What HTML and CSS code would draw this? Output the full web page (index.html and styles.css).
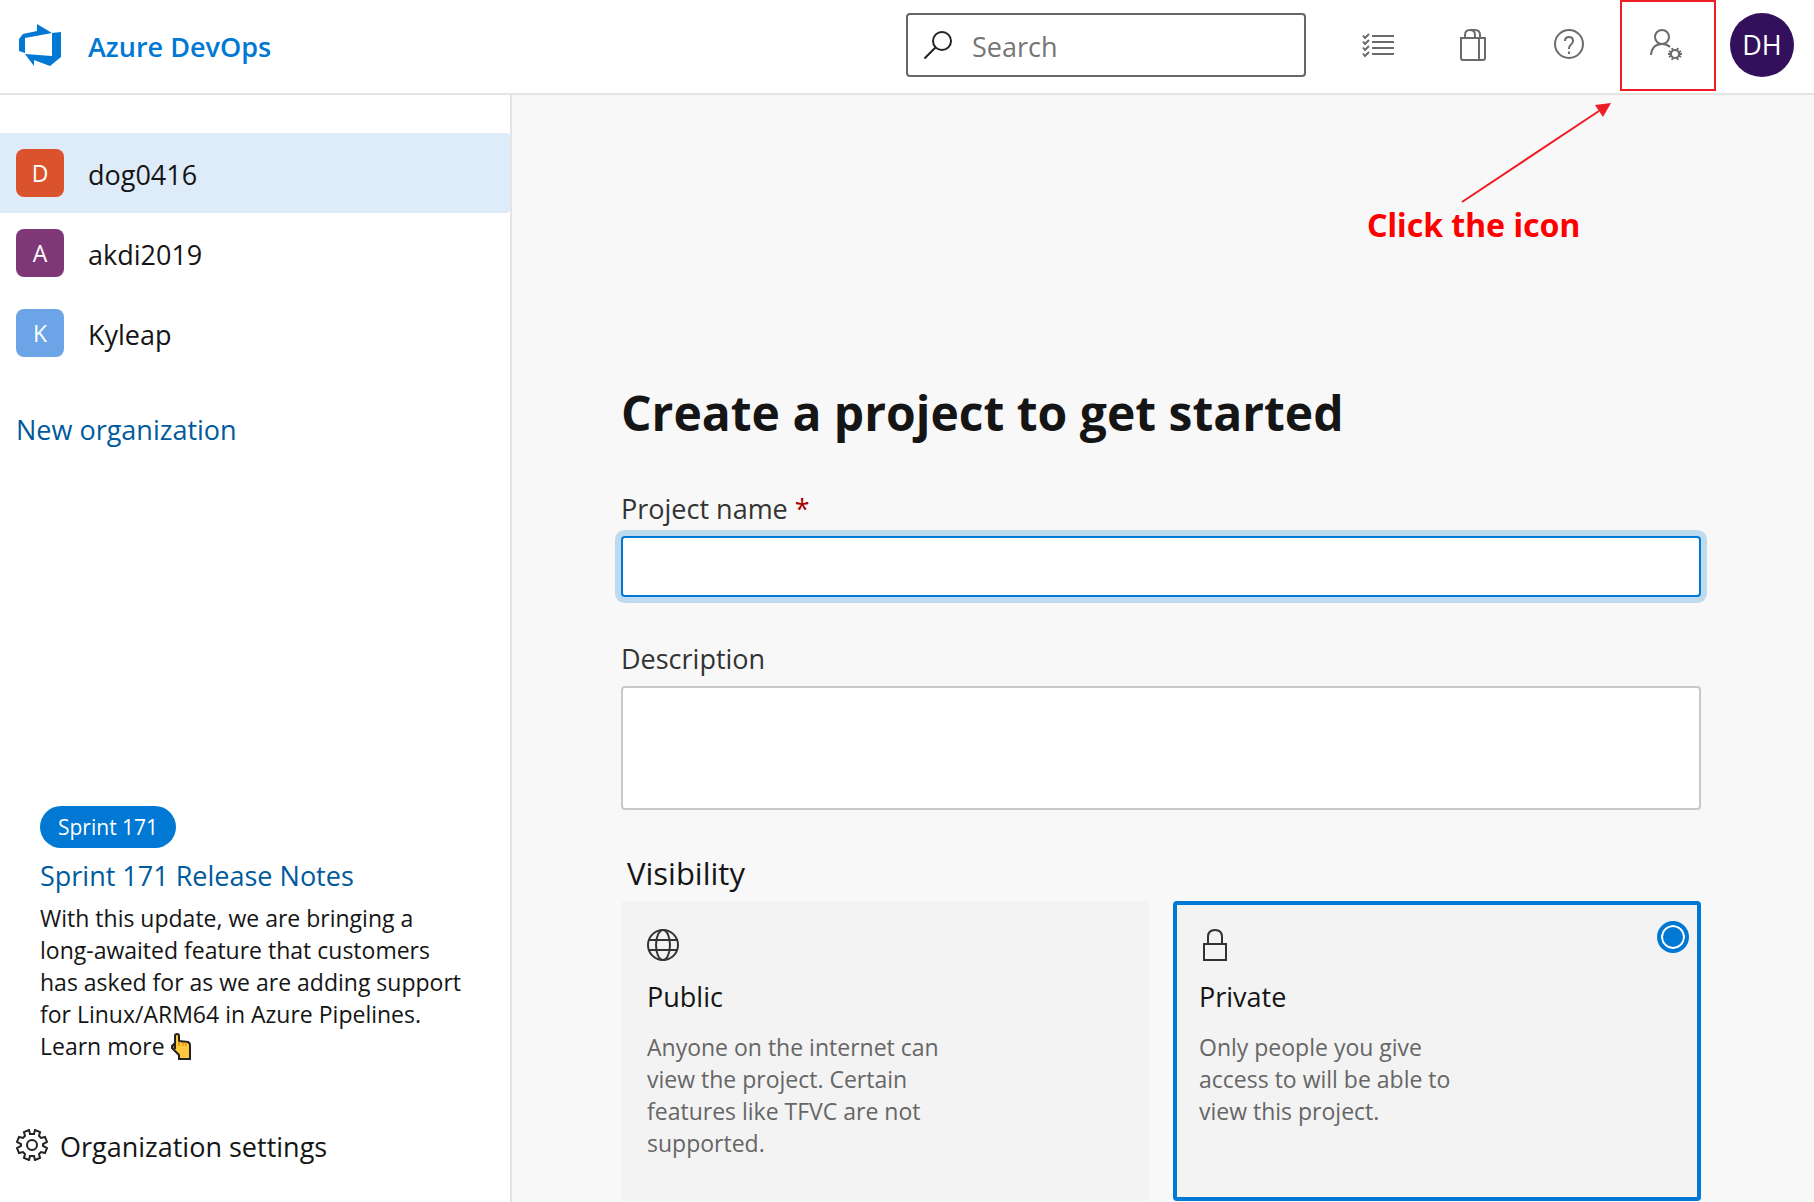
FILE: index.html
```html
<!DOCTYPE html>
<html lang="en">
<head>
    <meta charset="UTF-8">
    <title>Azure DevOps</title>
    <link rel="stylesheet" href="styles.css">
</head>
<body>
<header class="header">
    <a class="brand" href="#">
        <svg class="brand-logo" viewBox="0 0 42 42" aria-hidden="true">
            <path fill="#0078d4" d="M18 0 33 9 42 8V33L31 42 15 36V42L6 30 33 32V9L6 14V29L0 27V15L4 10 18 7Z"/>
        </svg>
        <span class="name">Azure DevOps</span>
    </a>
    <div class="search">
        <svg class="search-icon" viewBox="0 0 28 28" aria-hidden="true">
            <circle cx="18" cy="10" r="9"/>
            <path d="M11.5 16.500.5 27.500"/>
        </svg>
        <input class="search-input name" type="text" placeholder="Search" aria-label="Search">
    </div>
    <nav class="tools">
        <button class="tool" type="button" aria-label="Work items">
            <svg class="tool-icon" viewBox="0 0 32 32">
                <path d="M10 7H32M10 13H32M10 19H32M10 25H32"/>
                <path d="M1 6.500 3 9 7 5M1 12.500 3 15 7 11M1 18.500 3 21 7 17M1 24.500 3 27 7 23"/>
            </svg>
        </button>
        <button class="tool" type="button" aria-label="Marketplace">
            <svg class="tool-icon" viewBox="0 0 32 32">
                <path d="M3 9H27V29Q27 31 25 31H5Q3 31 3 29ZM21 9V29Q21 31 23 31"/>
                <path d="M7 9V6Q7 1 12 1Q17 1 17 6V9M12 1H17Q22 1 22 6V9"/>
            </svg>
        </button>
        <button class="tool" type="button" aria-label="Help">
            <svg class="tool-icon" viewBox="0 0 32 32">
                <circle cx="15" cy="15" r="14"/>
                <path d="M11 12Q11 8 15 8T19 12Q19 14 17 15.500T15 20"/>
                <path d="M15 22.500V25"/>
            </svg>
        </button>
        <button class="tool" type="button" aria-label="User settings">
            <svg class="tool-icon" viewBox="0 0 32 32">
                <circle cx="12" cy="8" r="7"/>
                <path d="M1 26Q2 15 12 15Q17 15 20 18"/>
                <circle cx="25" cy="25" r="4"/>
                <path d="M29 25H32M18 25H21M27 21.500 28 19M23 21.500 22 19M27 28.500 28 31M23 28.500 22 31M28.500 23.500 31 22M28.500 26.500 31 28M21.500 23.500 19 22M21.500 26.500 19 28"/>
            </svg>
            <span class="marker"></span>
        </button>
    </nav>
    <button class="avatar" type="button">DH</button>

    <div class="callout">
        <svg class="callout-arrow" viewBox="0 0 150 100" aria-hidden="true">
            <path d="M1 99 138 8" fill="none" stroke="#ee1c25" stroke-width="2"/>
            <path d="M150 0 134 2 142 14Z" fill="#ee1c25"/>
        </svg>
        <p class="callout-text">Click the icon</p>
    </div>
</header>

<div class="page">
    <aside class="sidebar">
        <nav class="orgs">
            <a class="org selected" href="#"><span class="org-badge orange">D</span><span class="name">dog0416</span></a>
            <a class="org" href="#"><span class="org-badge purple">A</span><span class="name">akdi2019</span></a>
            <a class="org" href="#"><span class="org-badge blue">K</span><span class="name">Kyleap</span></a>
        </nav>
        <a class="link new-org" href="#">New organization</a>

        <section class="release">
            <span class="pill">Sprint 171</span>
            <a class="link release-link" href="#">Sprint 171 Release Notes</a>
            <p class="release-text">With this update, we are bringing a long-awaited feature that customers has asked for as we are adding support for Linux/ARM64 in Azure Pipelines. Learn more
                <svg class="hand" viewBox="0 0 20 27" aria-hidden="true">
                    <path fill="#ffc83d" d="M4 16V3Q4 1 6 1T8 3V8L17 9Q19 10 19 12V26H8V22L1 15V13Q1 11 4 11"/>
                    <path fill="#d67d00" d="M4 10 1 13 4 17Z"/>
                    <path fill="none" stroke="#222" stroke-width="2" d="M4 16V3Q4 1 6 1T8 3V8L17 9Q19 10 19 12V26H8V22L1 15V13L4 10"/>
                    <path fill="none" stroke="#d67d00" d="M8 8V13M12 9V13M15 9V13"/>
                </svg>
            </p>
        </section>

        <a class="settings" href="#">
            <svg class="settings-icon" viewBox="0 0 32 32" aria-hidden="true">
                <circle cx="16" cy="16" r="5"/>
                <path d="M13 1 14 5H18L19 1 24 3 23 7 25 9 29 8 31 13 27 15V17L31 19 29 24 25 23 23 25 24 29 19 31 18 27H14L13 31 8 29 9 25 7 23 3 24 1 19 5 17V15L1 13 3 8 7 9 9 7 8 3Z"/>
            </svg>
            <span class="name">Organization settings</span>
        </a>
    </aside>

    <main class="content">
        <form class="project" action="#">
            <h1 class="title">Create a project to get started</h1>

            <label class="label" for="name">Project name <span class="required">*</span></label>
            <input class="field field-name" type="text" id="name" name="name" required>

            <label class="label" for="description">Description</label>
            <textarea class="field field-description" id="description" name="description"></textarea>

            <fieldset class="visibility">
                <legend class="legend">Visibility</legend>
                <div class="cards">
                    <label class="card">
                        <input class="radio" type="radio" name="visibility" value="public">
                        <svg class="card-icon" viewBox="0 0 32 32" aria-hidden="true">
                            <circle cx="16" cy="16" r="15"/>
                            <ellipse cx="16" cy="16" rx="7" ry="15"/>
                            <path d="M2 11H30M2 21H30"/>
                        </svg>
                        <span class="card-title">Public</span>
                        <span class="card-text">Anyone on the internet can view the project. Certain features like TFVC are not supported.</span>
                    </label>
                    <label class="card">
                        <input class="radio" type="radio" name="visibility" value="private" checked>
                        <svg class="card-icon" viewBox="0 0 32 32" aria-hidden="true">
                            <path d="M5 15H27V31H5ZM9 15V8Q9 1 16 1T23 8V15"/>
                        </svg>
                        <span class="card-title">Private</span>
                        <span class="card-text">Only people you give access to will be able to view this project.</span>
                    </label>
                </div>
            </fieldset>
        </form>
    </main>
</div>
</body>
</html>
```

FILE: styles.css
```css
* {
    box-sizing: border-box;
    margin: 0;
    padding: 0;
}

body {
    display: flex;
    flex-direction: column;
    height: 100vh;
    overflow: hidden;
    font-family: "Segoe UI", "Open Sans", sans-serif;
    font-size: 27px;
    line-height: 40px;
    color: #151515;
}

a {
    color: inherit;
    text-decoration: none;
}

svg {
    fill: none;
}

input, textarea, button {
    font: inherit;
}

/* text that stands beside an icon sits a little lower than the icon */
.name {
    padding-top: 3px;
}

/* header */
.header {
    position: relative;
    display: flex;
    flex: none;
    align-items: center;
    height: 95px;
    padding: 0 20px 3px 19px;
    border-bottom: 2px solid #e4e4e4;
    background: #fff;
}

.brand {
    display: flex;
    align-items: center;
    gap: 27px;
    margin-right: auto;
    color: #0078d4;
    font-weight: 600;
}

.brand-logo {
    width: 42px;
    height: 42px;
}

.search {
    display: flex;
    align-items: center;
    gap: 20px;
    width: 400px;
    height: 64px;
    margin-right: 24px;
    padding: 0 16px;
    border: 2px solid #666;
    border-radius: 4px;
}

.search-icon {
    flex: none;
    width: 28px;
    height: 28px;
    stroke: #222;
    stroke-width: 2;
}

.search-input {
    width: 100%;
    border: 0;
    outline: 0;
    background: none;
}

.search-input::placeholder {
    color: #757575;
}

.tools {
    display: flex;
    margin-right: 16px;
}

.tool {
    position: relative;
    display: flex;
    align-items: center;
    justify-content: center;
    width: 96px;
    height: 90px;
    border: 0;
    background: none;
}

.tool-icon {
    width: 32px;
    height: 32px;
    stroke: #6b6b6b;
    stroke-width: 2;
}

.marker {
    position: absolute;
    top: 0;
    left: 2px;
    width: 96px;
    height: 91px;
    border: 2px solid #ee1c25;
}

.avatar {
    width: 64px;
    height: 64px;
    border: 0;
    border-radius: 50%;
    background: #32105c;
    color: #fff;
}

.callout {
    position: absolute;
    top: 103px;
    right: 203px;
    width: 244px;
}

.callout-arrow {
    display: block;
    width: 150px;
    height: 100px;
    margin-left: auto;
}

.callout-text {
    color: #f00;
    font-family: Tahoma, "Noto Sans", sans-serif;
    font-size: 32px;
    font-weight: 700;
    line-height: 44px;
    white-space: nowrap;
}

/* sidebar */
.page {
    display: flex;
    flex: 1;
    min-height: 0;
}

.sidebar {
    display: flex;
    flex: none;
    flex-direction: column;
    width: 512px;
    padding: 38px 0 25px;
    border-right: 2px solid #e4e4e4;
    background: #fff;
}

.org {
    display: flex;
    align-items: center;
    gap: 24px;
    height: 80px;
    padding: 0 16px;
    border-radius: 0 4px 4px 0;
}

.selected {
    background: #deecf9;
}

.org-badge {
    width: 48px;
    height: 48px;
    border-radius: 8px;
    color: #fff;
    font-size: 23px;
    line-height: 48px;
    text-align: center;
}

.orange {
    background: #da532c;
}

.purple {
    background: #7e3878;
}

.blue {
    background: #6ba5e7;
}

.link {
    color: #005a9e;
}

.new-org {
    margin: 37px 16px 0;
}

.release {
    display: flex;
    flex-direction: column;
    align-items: flex-start;
    margin: auto 40px 51px;
}

.pill {
    padding: 0 18px;
    border-radius: 21px;
    background: #0078d4;
    color: #fff;
    font-size: 21px;
    line-height: 42px;
}

.release-link {
    margin: 8px 0 6px;
}

.release-text {
    font-size: 23px;
    line-height: 32px;
}

.hand {
    width: 20px;
    height: 27px;
    vertical-align: -5px;
}

.settings {
    display: flex;
    align-items: center;
    gap: 12px;
    height: 64px;
    padding: 0 16px;
}

.settings-icon {
    width: 32px;
    height: 32px;
    stroke: #222;
    stroke-width: 2;
}

/* project form */
.content {
    flex: 1;
    min-width: 0;
    padding: 286px 113px 0 109px;
    background: #f8f8f8;
}

.title {
    margin-bottom: 48px;
    font-size: 48px;
    font-weight: 700;
    line-height: 64px;
    white-space: nowrap;
}

.label {
    display: block;
    margin-bottom: 11px;
    color: #333;
    line-height: 32px;
}

.required {
    color: #a80000;
}

.field {
    display: block;
    width: 100%;
    padding: 8px 16px;
    border: 2px solid #c8c8c8;
    border-radius: 4px;
    outline: 0;
    background: #fff;
    resize: none;
}

.field-name {
    height: 61px;
    margin-bottom: 46px;
    border-color: #0078d4;
    box-shadow: 0 0 0 6px #bedaef;
}

.field-description {
    height: 124px;
    margin-bottom: 43px;
}

.visibility {
    border: 0;
}

.legend {
    margin-bottom: 8px;
    padding-left: 6px;
    font-size: 31px;
}

.cards {
    display: grid;
    grid-template-columns: 1fr 1fr;
    gap: 24px;
}

.card {
    position: relative;
    display: flex;
    flex-direction: column;
    min-height: 300px;
    padding: 24px 22px;
    border: 4px solid #f3f3f3;
    border-radius: 4px;
    background: #f3f3f3;
}

.card:has(.radio:checked) {
    border-color: #0078d4;
}

/* the radio only shows on the chosen card */
.radio {
    position: absolute;
    top: 16px;
    right: 8px;
    width: 32px;
    height: 32px;
    border: 4px solid #0078d4;
    border-radius: 50%;
    background: #0078d4;
    box-shadow: inset 0 0 0 2px #fff;
    appearance: none;
}

.radio:not(:checked) {
    opacity: 0;
}

.card-icon {
    width: 32px;
    height: 32px;
    stroke: #333;
    stroke-width: 2;
}

.card-title {
    margin: 16px 0 14px;
}

.card-text {
    max-width: 294px;
    color: #666;
    font-size: 23px;
    line-height: 32px;
}
```
